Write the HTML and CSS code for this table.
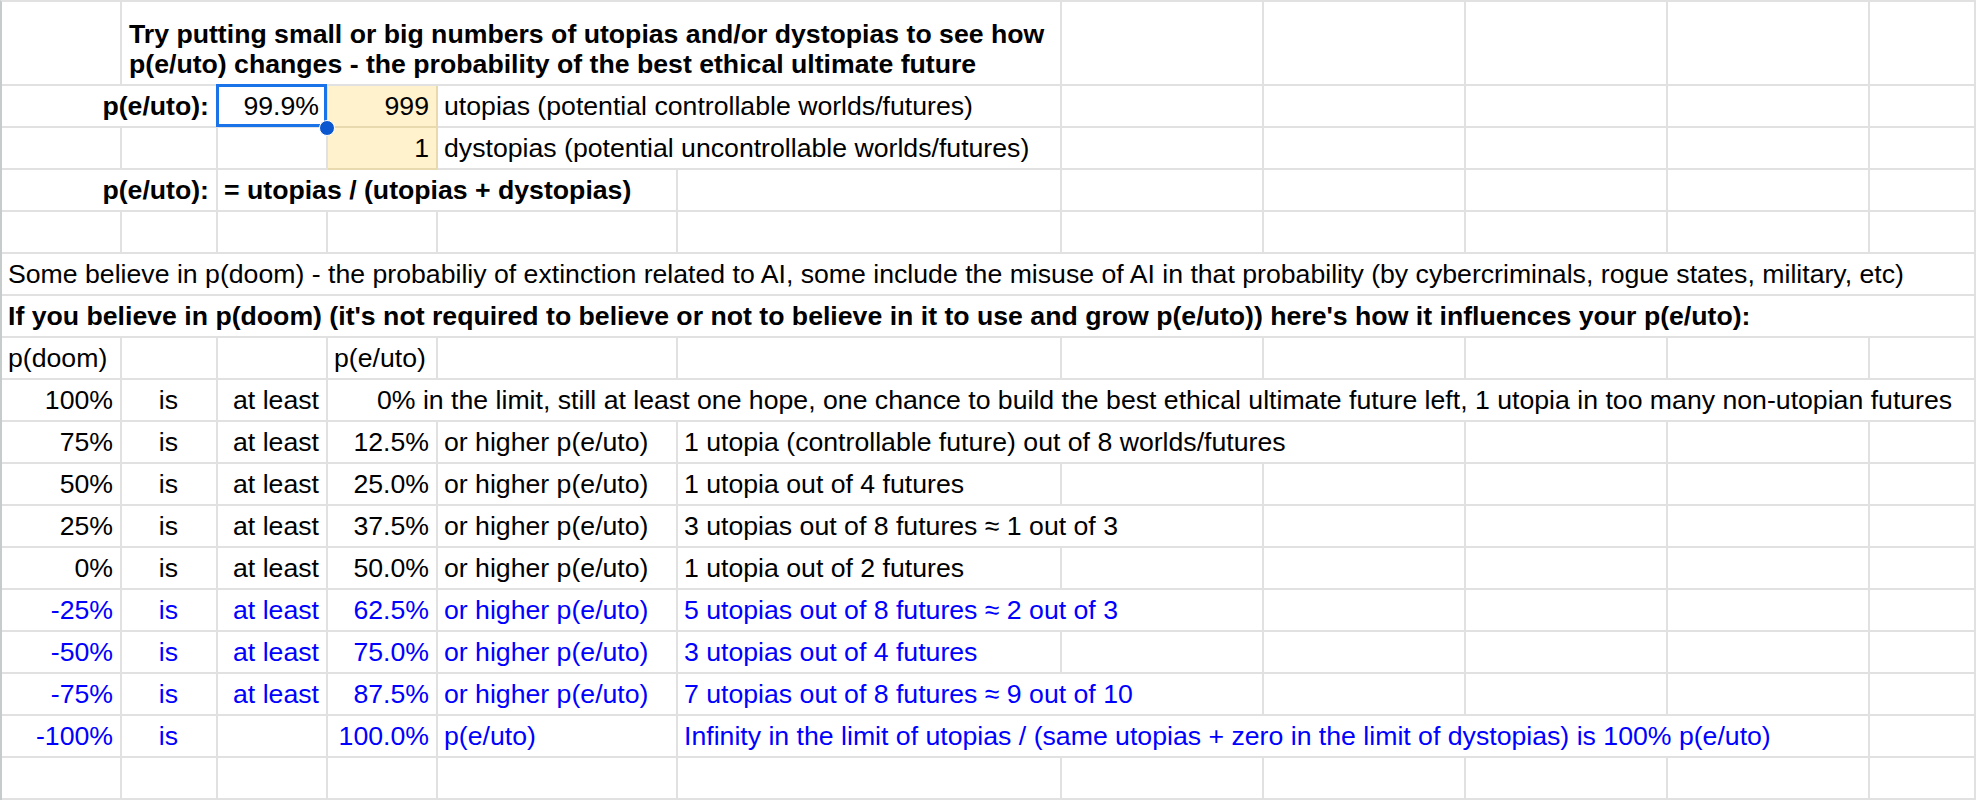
FILE: index.html
```html
<!DOCTYPE html>
<html>
<head>
<meta charset="utf-8">
<title>p(e/uto)</title>
<link rel="stylesheet" href="styles.css">
</head>
<body>
<div class="sheet">
  <!-- row 1 -->
  <div class="c"></div>
  <div class="c bold span5 wrap">Try putting small or big numbers of utopias and/or dystopias to see how<br>p(e/uto) changes - the probability of the best ethical ultimate future</div>
  <div class="c"></div><div class="c"></div><div class="c"></div><div class="c"></div><div class="c"></div>

  <!-- row 2 -->
  <div class="c bold right span2">p(e/uto):</div>
  <div class="c right selected">99.9%<span class="sel-box"></span><span class="sel-handle"></span></div>
  <div class="c right input">999</div>
  <div class="c span2">utopias (potential controllable worlds/futures)</div>
  <div class="c"></div><div class="c"></div><div class="c"></div><div class="c"></div><div class="c"></div>

  <!-- row 3 -->
  <div class="c"></div>
  <div class="c"></div>
  <div class="c"></div>
  <div class="c right input">1</div>
  <div class="c span2">dystopias (potential uncontrollable worlds/futures)</div>
  <div class="c"></div><div class="c"></div><div class="c"></div><div class="c"></div><div class="c"></div>

  <!-- row 4 -->
  <div class="c bold right span2">p(e/uto):</div>
  <div class="c bold span3">= utopias / (utopias + dystopias)</div>
  <div class="c"></div>
  <div class="c"></div><div class="c"></div><div class="c"></div><div class="c"></div><div class="c"></div>

  <!-- row 5 -->
  <div class="c"></div><div class="c"></div><div class="c"></div><div class="c"></div><div class="c"></div><div class="c"></div>
  <div class="c"></div><div class="c"></div><div class="c"></div><div class="c"></div><div class="c"></div>

  <!-- row 6 -->
  <div class="c span-all">Some believe in p(doom) - the probabiliy of extinction related to AI, some include the misuse of AI in that probability (by cybercriminals, rogue states, military, etc)</div>

  <!-- row 7 -->
  <div class="c bold span-all">If you believe in p(doom) (it's not required to believe or not to believe in it to use and grow p(e/uto)) here's how it influences your p(e/uto):</div>

  <!-- row 8 -->
  <div class="c">p(doom)</div>
  <div class="c"></div>
  <div class="c"></div>
  <div class="c">p(e/uto)</div>
  <div class="c"></div><div class="c"></div>
  <div class="c"></div><div class="c"></div><div class="c"></div><div class="c"></div><div class="c"></div>

  <!-- row 9 -->
  <div class="c right">100%</div>
  <div class="c center">is</div>
  <div class="c right">at least</div>
  <div class="c span8 lead">0% in the limit, still at least one hope, one chance to build the best ethical ultimate future left, 1 utopia in too many non-utopian futures</div>

  <!-- row 10 -->
  <div class="c right">75%</div>
  <div class="c center">is</div>
  <div class="c right">at least</div>
  <div class="c right">12.5%</div>
  <div class="c">or higher p(e/uto)</div>
  <div class="c span3">1 utopia (controllable future) out of 8 worlds/futures</div>
  <div class="c"></div><div class="c"></div><div class="c"></div>

  <!-- row 11 -->
  <div class="c right">50%</div>
  <div class="c center">is</div>
  <div class="c right">at least</div>
  <div class="c right">25.0%</div>
  <div class="c">or higher p(e/uto)</div>
  <div class="c">1 utopia out of 4 futures</div>
  <div class="c"></div><div class="c"></div><div class="c"></div><div class="c"></div><div class="c"></div>

  <!-- row 12 -->
  <div class="c right">25%</div>
  <div class="c center">is</div>
  <div class="c right">at least</div>
  <div class="c right">37.5%</div>
  <div class="c">or higher p(e/uto)</div>
  <div class="c span2">3 utopias out of 8 futures ≈ 1 out of 3</div>
  <div class="c"></div><div class="c"></div><div class="c"></div><div class="c"></div>

  <!-- row 13 -->
  <div class="c right">0%</div>
  <div class="c center">is</div>
  <div class="c right">at least</div>
  <div class="c right">50.0%</div>
  <div class="c">or higher p(e/uto)</div>
  <div class="c">1 utopia out of 2 futures</div>
  <div class="c"></div><div class="c"></div><div class="c"></div><div class="c"></div><div class="c"></div>

  <!-- row 14 -->
  <div class="c right blue">-25%</div>
  <div class="c center blue">is</div>
  <div class="c right blue">at least</div>
  <div class="c right blue">62.5%</div>
  <div class="c blue">or higher p(e/uto)</div>
  <div class="c span2 blue">5 utopias out of 8 futures ≈ 2 out of 3</div>
  <div class="c"></div><div class="c"></div><div class="c"></div><div class="c"></div>

  <!-- row 15 -->
  <div class="c right blue">-50%</div>
  <div class="c center blue">is</div>
  <div class="c right blue">at least</div>
  <div class="c right blue">75.0%</div>
  <div class="c blue">or higher p(e/uto)</div>
  <div class="c blue">3 utopias out of 4 futures</div>
  <div class="c"></div><div class="c"></div><div class="c"></div><div class="c"></div><div class="c"></div>

  <!-- row 16 -->
  <div class="c right blue">-75%</div>
  <div class="c center blue">is</div>
  <div class="c right blue">at least</div>
  <div class="c right blue">87.5%</div>
  <div class="c blue">or higher p(e/uto)</div>
  <div class="c span2 blue">7 utopias out of 8 futures ≈ 9 out of 10</div>
  <div class="c"></div><div class="c"></div><div class="c"></div><div class="c"></div>

  <!-- row 17 -->
  <div class="c right blue">-100%</div>
  <div class="c center blue">is</div>
  <div class="c"></div>
  <div class="c right blue">100.0%</div>
  <div class="c blue">p(e/uto)</div>
  <div class="c span5 blue">Infinity in the limit of utopias / (same utopias + zero in the limit of dystopias) is 100% p(e/uto)</div>
  <div class="c"></div>

  <!-- row 18 -->
  <div class="c"></div><div class="c"></div><div class="c"></div><div class="c"></div><div class="c"></div><div class="c"></div>
  <div class="c"></div><div class="c"></div><div class="c"></div><div class="c"></div><div class="c"></div>
</div>
</body>
</html>
```

FILE: styles.css
```css
html, body {
  margin: 0;
  padding: 0;
  background: #ffffff;
}

body {
  width: 1976px;
  height: 800px;
  overflow: hidden;
  font-family: "Liberation Sans", Arial, sans-serif;
  font-size: 26.67px;
  color: #000000;
}

.sheet {
  display: grid;
  grid-template-columns: 120px 96px 110px 110px 240px 384px 202px 202px 202px 202px 1fr;
  grid-template-rows: 84px;
  grid-auto-rows: 42px;
  border-left: 2px solid #c6cccc;
  border-top: 2px solid #e1e1e1;
  box-sizing: border-box;
  width: 1976px;
}

.c {
  box-sizing: border-box;
  border-right: 2px solid #e1e1e1;
  border-bottom: 2px solid #e1e1e1;
  padding: 0 7px 4px 6px;
  display: flex;
  align-items: flex-end;
  line-height: 30.67px;
  white-space: nowrap;
  overflow: visible;
  position: relative;
  min-width: 0;
}

.wrap {
  padding-left: 7px;
}

.bold {
  font-weight: bold;
}

.right {
  justify-content: flex-end;
}

.center {
  justify-content: center;
}

.blue {
  color: #0000ff;
}

.span2 { grid-column: span 2; }
.span3 { grid-column: span 3; }
.span5 { grid-column: span 5; }
.span8 { grid-column: span 8; }
.span-all { grid-column: 1 / -1; }

.lead {
  padding-left: 49px;
}

.input {
  background: #fff2cc;
  border-right-color: #e8d9ae;
  border-bottom-color: #e8d9ae;
}

.selected {
  z-index: 2;
}

.sel-box {
  position: absolute;
  left: -2px;
  top: -2px;
  width: 111px;
  height: 43px;
  border: 3px solid #1a73e8;
  box-sizing: border-box;
  pointer-events: none;
}

.sel-handle {
  position: absolute;
  left: 101px;
  top: 34px;
  width: 16px;
  height: 16px;
  box-sizing: border-box;
  border-radius: 50%;
  background: #0b57d0;
  border: 1.5px solid #ffffff;
}
```
